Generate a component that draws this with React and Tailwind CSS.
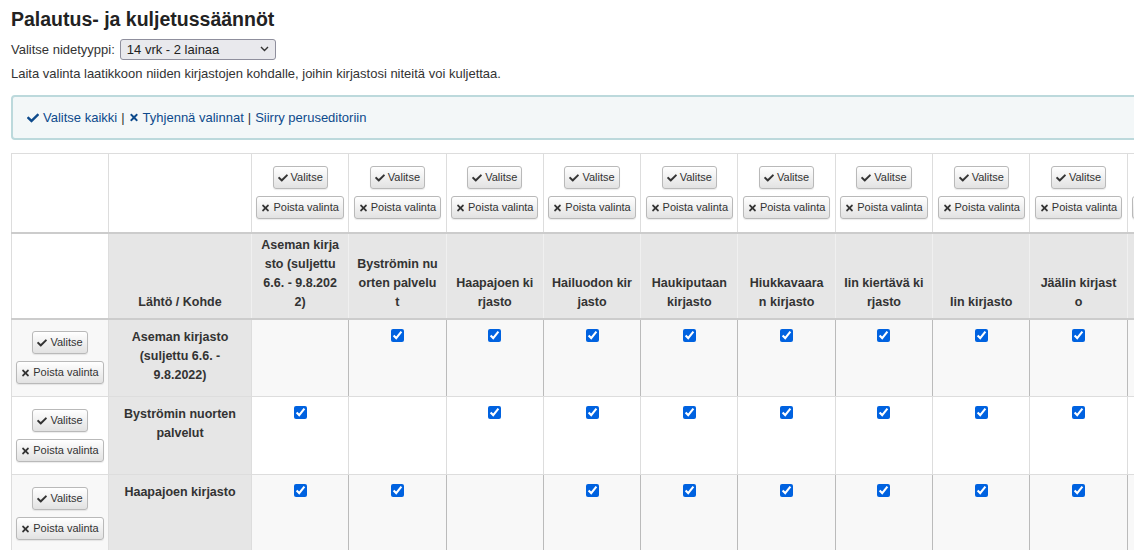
import React from "react";
import { FaCheck, FaTimes } from "react-icons/fa";

const libs = [
  "Aseman kirjasto (suljettu 6.6. - 9.8.2022)",
  "Byströmin nuorten palvelut",
  "Haapajoen kirjasto",
  "Hailuodon kirjasto",
  "Haukiputaan kirjasto",
  "Hiukkavaaran kirjasto",
  "Iin kiertävä kirjasto",
  "Iin kirjasto",
  "Jäälin kirjasto",
  "Kaakkurin kirjasto",
];

const headLines = [
  ["Aseman kirja", "sto (suljettu", "6.6. - 9.8.202", "2)"],
  ["Byströmin nu", "orten palvelu", "t"],
  ["Haapajoen ki", "rjasto"],
  ["Hailuodon kir", "jasto"],
  ["Haukiputaan", "kirjasto"],
  ["Hiukkavaara", "n kirjasto"],
  ["Iin kiertävä ki", "rjasto"],
  ["Iin kirjasto"],
  ["Jäälin kirjast", "o"],
  ["Kaakkurin kirj", "asto"],
];

const rows = libs.slice(0, 3);

function Btn({ check, children }) {
  return (
    <button
      type="button"
      className="inline-flex items-center gap-[3px] h-[23px] px-[4px] rounded-[3px] border border-[#b9b9b9] bg-gradient-to-b from-[#ffffff] to-[#e2e2e2] text-[11px] text-[#333] leading-none shadow-[0_1px_1px_rgba(0,0,0,0.08)] whitespace-nowrap"
    >
      {check ? (
        <FaCheck className="w-[10px] h-[10px] text-[#333]" />
      ) : (
        <FaTimes className="w-[9px] h-[10px] text-[#333]" />
      )}
      {children}
    </button>
  );
}

function BtnPair() {
  return (
    <div className="flex flex-col items-center gap-[7px]">
      <Btn check>Valitse</Btn>
      <Btn>Poista valinta</Btn>
    </div>
  );
}

function Box() {
  return (
    <input
      type="checkbox"
      defaultChecked
      className="w-[13px] h-[13px] m-0 accent-[#0062e0] align-top"
    />
  );
}

export default function App() {
  return (
    <div
      className="w-[1134px] h-[550px] overflow-hidden bg-white text-[#333]"
      style={{ fontFamily: '"Liberation Sans", Arial, sans-serif' }}
    >
      <div className="w-[1300px] pl-[11px]">
        <h1 className="mt-[8px] text-[19.5px] leading-[23px] font-bold text-[#222]">
          Palautus- ja kuljetussäännöt
        </h1>
        <div className="mt-[8px] flex items-center gap-[5px] text-[13px] h-[21px]">
          <span>Valitse nidetyyppi:</span>
          <div className="relative w-[156px] h-[21px]">
            <select className="appearance-none w-full h-full rounded-[3px] border border-[#8f8f9d] bg-[#e9e9ed] pl-[6px] text-[13px] text-[#222] outline-none">
              <option>14 vrk - 2 lainaa</option>
            </select>
            <svg
              className="absolute right-[7px] top-[7px] pointer-events-none"
              width="9"
              height="6"
              viewBox="0 0 9 6"
            >
              <path d="M1 1l3.5 3.5L8 1" fill="none" stroke="#333" strokeWidth="1.4" />
            </svg>
          </div>
        </div>
        <p className="mt-[5px] text-[13px] leading-[17px] text-[#333]">
          Laita valinta laatikkoon niiden kirjastojen kohdalle, joihin kirjastosi niteitä voi kuljettaa.
        </p>
        <div className="mt-[13px] h-[45px] w-[1280px] rounded-[4px] border-2 border-[#bcd9dc] bg-[#f3f7f8] flex items-center pl-[14px] text-[13px] text-[#0d4a8c]">
          <FaCheck className="w-[12px] h-[12px] mr-[4px]" />
          <span>Valitse kaikki</span>
          <span className="mx-[4px] text-[#333]">|</span>
          <FaTimes className="w-[10px] h-[11px] mr-[4px]" />
          <span>Tyhjennä valinnat</span>
          <span className="mx-[4px] text-[#333]">|</span>
          <span>Siirry peruseditoriin</span>
        </div>

        <table className="mt-[13px] table-fixed border-collapse w-[1213px] text-[12.5px]">
          <colgroup>
            <col className="w-[97px]" />
            <col className="w-[143px]" />
            {libs.map((l) => (
              <col key={l} className="w-[97.3px]" />
            ))}
          </colgroup>
          <thead>
            <tr className="h-[79px] bg-white">
              <td className="border border-[#dddddd]" />
              <td className="border border-[#dddddd]" />
              {libs.map((l) => (
                <td key={l} className="border border-[#dddddd] text-center align-middle">
                  <BtnPair />
                </td>
              ))}
            </tr>
            <tr className="h-[86px] bg-[#e6e6e6]">
              <th className="bg-white border border-[#dddddd] border-t-2 border-b-2 border-t-[#cccccc] border-b-[#cccccc]" />
              <th className="border border-[#f0f0f0] border-t-2 border-b-2 border-t-[#cccccc] border-b-[#cccccc] align-bottom pb-[6px] px-[8px] font-bold leading-[19px] text-[#333]">
                Lähtö / Kohde
              </th>
              {headLines.map((lines, i) => (
                <th
                  key={i}
                  className="border border-[#f0f0f0] border-t-2 border-b-2 border-t-[#cccccc] border-b-[#cccccc] align-bottom pb-[6px] px-[2px] font-bold leading-[19px] text-[#333] whitespace-nowrap overflow-hidden"
                >
                  {lines.map((ln, j) => (
                    <span key={j} className="block">
                      {ln}
                    </span>
                  ))}
                </th>
              ))}
            </tr>
          </thead>
          <tbody>
            {rows.map((r, ri) => {
              const odd = ri % 2 === 0;
              const vb = odd ? "border-x-[#bbbbbb]" : "border-x-[#dddddd]";
              return (
                <tr key={r} className={`h-[78px] ${odd ? "bg-[#f8f8f8]" : "bg-white"}`}>
                  <td className="border border-[#dddddd] text-center align-middle">
                    <BtnPair />
                  </td>
                  <th className="border border-[#dddddd] bg-[#e6e6e6] align-top pt-[8px] px-[8px] font-bold leading-[19px] text-[#333] text-center">
                    {r}
                  </th>
                  {libs.map((l, ci) => (
                    <td
                      key={l}
                      className={`border border-y-[#dddddd] ${vb} text-center align-top pt-[9px]`}
                    >
                      {ci !== ri && <Box />}
                    </td>
                  ))}
                </tr>
              );
            })}
          </tbody>
        </table>
      </div>
    </div>
  );
}
